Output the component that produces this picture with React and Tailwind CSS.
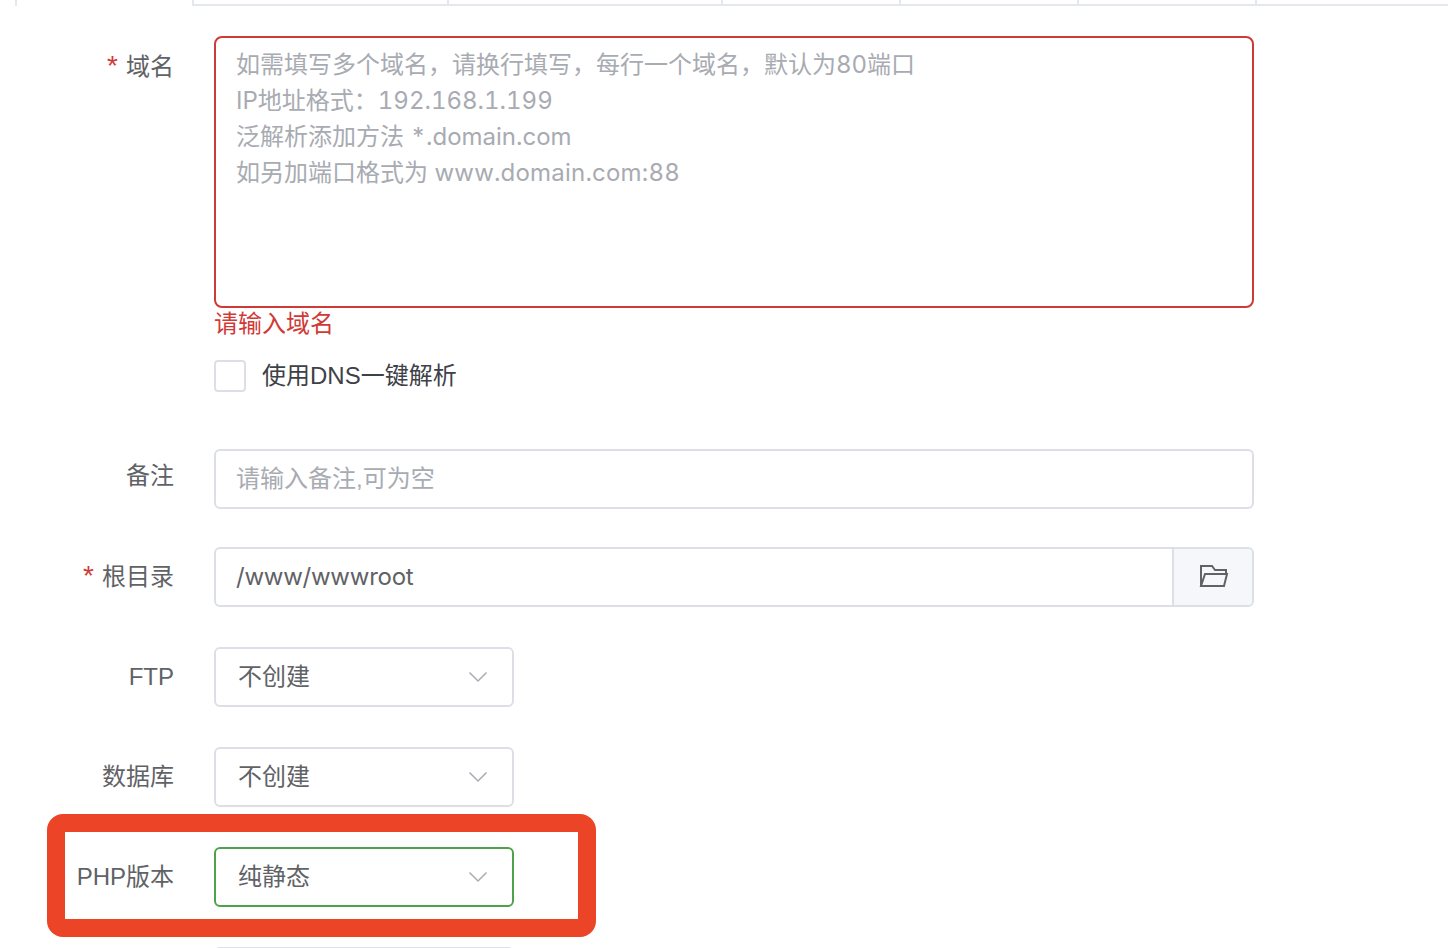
const fontStack = "font-['Liberation_Sans','Noto_Sans_CJK_SC',sans-serif]";
const inputFont = "font-['Inter','Noto_Sans_CJK_SC',sans-serif]";

function Label({ required, children, className = "" }) {
  return (
    <div className={`w-[174px] shrink-0 text-right text-[24px] leading-[36px] text-[#606266] ${className}`}>
      {required && <span className="mr-[8px] text-[28px] leading-[0] text-[#d03a36]">*</span>}
      {children}
    </div>
  );
}

function Chevron() {
  return (
    <svg width="20" height="12" viewBox="0 0 20 12" fill="none" stroke="#a8abb2" strokeWidth="1.5">
      <path d="M1.5 1.5L10 10l8.5-8.5" />
    </svg>
  );
}

function Select({ value, active }) {
  return (
    <div
      className={`flex h-[60px] w-[300px] items-center justify-between rounded-[6px] border-2 pl-[22px] pr-[24px] text-[24px] text-[#606266] ${
        active ? "border-[#4ea34a]" : "border-[#dcdfe6]"
      }`}
    >
      <span>{value}</span>
      <Chevron />
    </div>
  );
}

function FolderIcon() {
  return (
    <svg width="30" height="26" viewBox="0 0 30 26" fill="none" stroke="#606266" strokeWidth="2" className="-mt-[2px] ml-[2px]">
      <path d="M2 23V3h11l3 4h11v4" />
      <path d="M2 23h23l3-12H6z" />
    </svg>
  );
}

export default function App() {
  return (
    <div className={`relative h-[948px] w-[1448px] overflow-hidden bg-white ${fontStack}`}>
      {/* Tabs */}
      <div className="flex h-[6px] items-start">
        <div className="h-[6px] w-[177px] ml-[15px] border-l-2 border-[#e4e7ed]" />
        <div className="h-[6px] w-[255px] border-b-2 border-l-2 border-[#e4e7ed]" />
        <div className="h-[6px] w-[274px] border-b-2 border-l-2 border-[#e4e7ed]" />
        <div className="h-[6px] w-[178px] border-b-2 border-l-2 border-[#e4e7ed]" />
        <div className="h-[6px] w-[178px] border-b-2 border-l-2 border-[#e4e7ed]" />
        <div className="h-[6px] w-[178px] border-b-2 border-l-2 border-[#e4e7ed]" />
        <div className="h-[6px] flex-1 border-b-2 border-l-2 border-[#e4e7ed]" />
      </div>

      {/* Form */}
      <div className="pt-[30px]">
        <div className="flex gap-[40px]">
          <Label required className="pt-[13px]">域名</Label>
          <div className="w-[1040px]">
            <div className={`h-[272px] rounded-[8px] border-2 border-[#d03a36] px-[20px] pt-[9px] text-[24px] leading-[36px] text-[#a8abb2] tabular-nums ${inputFont}`}>
              <div>如需填写多个域名，请换行填写，每行一个域名，默认为80端口</div>
              <div>IP地址格式：192.168.1.199</div>
              <div>泛解析添加方法 *.domain.com</div>
              <div>如另加端口格式为 <span className="tracking-[0.2px]">www.domain.com:88</span></div>
            </div>
            <div className="h-[30px] pt-[2px] text-[24px] leading-[28px] text-[#d03a36]">请输入域名</div>
            <div className="mt-[22px] flex items-center gap-[16px]">
              <div className="h-[32px] w-[32px] rounded-[4px] border-2 border-[#dcdfe6]" />
              <span className="text-[24px] leading-[32px] text-[#3e4147]">使用DNS一键解析</span>
            </div>
          </div>
        </div>

        <div className="mt-[57px] flex gap-[40px]">
          <Label className="-mt-[3px] pt-[12px]">备注</Label>
          <div className="flex h-[60px] w-[1040px] items-center rounded-[6px] border-2 border-[#dcdfe6] px-[20px] text-[24px] text-[#a8abb2]">
            请输入备注,可为空
          </div>
        </div>

        <div className="mt-[38px] flex items-center gap-[40px]">
          <Label required>根目录</Label>
          <div className="flex h-[60px] w-[1040px] overflow-hidden rounded-[6px] border-2 border-[#dcdfe6]">
            <div className={`flex flex-1 items-center px-[20px] text-[24px] tracking-[-0.25px] text-[#606266] ${inputFont}`}>/www/wwwroot</div>
            <div className="flex w-[80px] items-center justify-center border-l-2 border-[#dcdfe6] bg-[#f5f7fa]">
              <FolderIcon />
            </div>
          </div>
        </div>

        <div className="mt-[40px] flex items-center gap-[40px]">
          <Label>FTP</Label>
          <Select value="不创建" />
        </div>

        <div className="mt-[40px] flex items-center gap-[40px]">
          <Label>数据库</Label>
          <Select value="不创建" />
        </div>

        <div className="mt-[40px] flex items-center gap-[40px]">
          <Label>PHP版本</Label>
          <Select value="纯静态" active />
        </div>

        <div className="mt-[40px] h-[60px] ml-[214px] w-[300px] rounded-[6px] border-2 border-[#dcdfe6]" />
      </div>

      {/* Annotation box over the PHP row */}
      <div className="absolute left-[47px] top-[814px] h-[123px] w-[549px] rounded-[16px] border-[18px] border-[#eb4427]" />
    </div>
  );
}
